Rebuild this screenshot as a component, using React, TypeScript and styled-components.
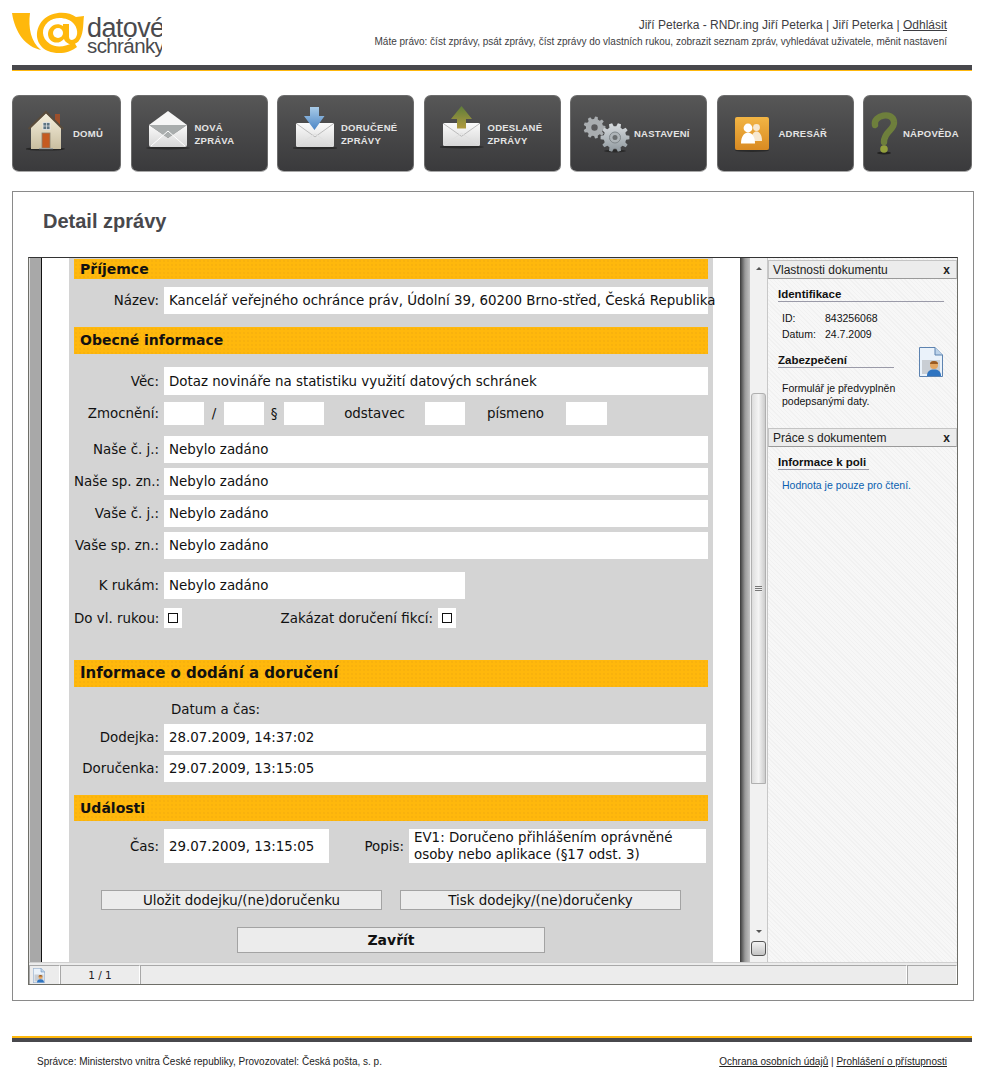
import React from "react";
import styled, { createGlobalStyle } from "styled-components";

const Global = createGlobalStyle`
  html, body { margin: 0; padding: 0; background: #fff; }
  body { font-family: "Liberation Sans", Arial, sans-serif; color: #222; }
`;

const Page = styled.div`
  width: 983px;
  height: 1075px;
  box-sizing: border-box;
  padding: 0 11px 0 12px;
  display: flex;
  flex-direction: column;
  overflow: hidden;
`;

const Header = styled.header`
  height: 65px;
  display: flex;
  justify-content: space-between;
`;
const LogoSvg = styled.svg`
  display: block;
  margin-top: 11px;
`;
const LogoWord = styled.text<{ $size: number }>`
  font-family: "Liberation Sans", Arial, sans-serif;
  font-size: ${(p) => p.$size}px;
  fill: #4a4a4e;
  letter-spacing: -0.6px;
`;
const UserBox = styled.div`
  padding: 17px 25px 0 0;
  text-align: right;
`;
const UserLine = styled.div`
  font-size: 12px;
  line-height: 16px;
  color: #3d3d42;
`;
const Rights = styled.div`
  font-size: 10px;
  line-height: 17px;
  color: #3d3d42;
`;
const DarkLink = styled.a`
  color: inherit;
  text-decoration: underline;
`;
const Rule = styled.div<{ $flip?: boolean }>`
  height: 6px;
  flex: none;
  background: ${(p) =>
    p.$flip
      ? "linear-gradient(#ffb80c 0 2px, #48484c 2px)"
      : "linear-gradient(#48484c 0 4.5px, #ffb80c 4.5px)"};
`;

const Nav = styled.nav`
  margin-top: 24px;
  display: flex;
  justify-content: space-between;
  width: 960px;
`;
const NavButton = styled.a<{ $w: number; $pad: number }>`
  width: ${(p) => p.$w}px;
  height: 77px;
  box-sizing: border-box;
  border-radius: 7px;
  border: 1px solid #6c6c6c;
  border-bottom-color: #a8a8a8;
  background: linear-gradient(#575757, #49494a 45%, #3a3a3c);
  padding-left: ${(p) => p.$pad}px;
  display: flex;
  align-items: center;
  overflow: hidden;
`;
const NavLabel = styled.span<{ $gap: number }>`
  margin-left: ${(p) => p.$gap}px;
  font-size: 9.5px;
  line-height: 13px;
  font-weight: bold;
  letter-spacing: 0.25px;
  color: #e4e4e4;
  white-space: pre-line;
`;
const IconSvg = styled.svg`
  display: block;
  flex: none;
`;

const Main = styled.main`
  margin-top: 19px;
  width: 962px;
  height: 810px;
  box-sizing: border-box;
  border: 1px solid #8a8a8a;
  padding: 0 15px;
  display: flex;
  flex-direction: column;
`;
const Title = styled.h1`
  margin: 0;
  height: 65px;
  padding: 17px 0 0 15px;
  box-sizing: border-box;
  font-size: 20px;
  line-height: 24px;
  font-weight: bold;
  color: #48484c;
`;

const Viewer = styled.section`
  width: 930px;
  height: 728px;
  box-sizing: border-box;
  border: 1px solid #6e6e68;
  border-top: 1px solid #333;
  display: flex;
  flex-direction: column;
  font-family: "DejaVu Sans", Verdana, sans-serif;
`;
const ViewerBody = styled.div`
  height: 704px;
  display: flex;
  overflow: hidden;
`;
const PageGutter = styled.div`
  width: 11px;
  flex: none;
  background: #a8a8a8;
  border-left: 1px solid #e0e0e0;
  border-right: 1px solid #111;
`;
const Paper = styled.div`
  width: 698px;
  flex: none;
  background: #fff;
  padding: 0 28px 0 27px;
  box-sizing: border-box;
`;
const Form = styled.div`
  width: 644px;
  height: 704px;
  background: #d4d4d4;
  padding: 1px 0 0 5px;
  box-sizing: border-box;
  font-size: 13.4px;
  color: #111;
`;
const SectionHead = styled.div<{ $h: number; $mt: number; $size?: number }>`
  width: 634px;
  height: ${(p) => p.$h}px;
  margin-top: ${(p) => p.$mt}px;
  background-color: #ffb80c;
  background-image: radial-gradient(#f0aa10 0.6px, transparent 0.8px);
  background-size: 4px 4px;
  padding-left: 6px;
  box-sizing: border-box;
  font-weight: bold;
  font-size: ${(p) => p.$size ?? 14}px;
  line-height: ${(p) => p.$h}px;
  color: #111;
`;
const Row = styled.div<{ $mt: number }>`
  margin-top: ${(p) => p.$mt}px;
  display: flex;
  align-items: center;
`;
const Label = styled.span<{ $w?: number }>`
  width: ${(p) => p.$w ?? 85}px;
  margin-right: 5px;
  flex: none;
  text-align: right;
  white-space: nowrap;
`;
const Field = styled.div<{ $w: number; $h?: number }>`
  width: ${(p) => p.$w}px;
  height: ${(p) => p.$h ?? 27}px;
  flex: none;
  box-sizing: border-box;
  background: #fff;
  padding: 0 5px;
  display: flex;
  align-items: center;
  white-space: nowrap;
  line-height: 17px;
`;
const WrapField = styled(Field)`
  white-space: normal;
`;
const Between = styled.span<{ $w: number }>`
  width: ${(p) => p.$w}px;
  flex: none;
  text-align: center;
`;
const CheckCell = styled.span<{ $mr?: number }>`
  width: 18px;
  height: 20px;
  background: #fff;
  flex: none;
  display: flex;
  align-items: center;
  justify-content: center;
  margin-right: ${(p) => p.$mr ?? 0}px;
`;
const CheckBox = styled.span`
  width: 8px;
  height: 8px;
  border: 1px solid #111;
  background: #fff;
`;
const PlainNote = styled.div<{ $mt: number }>`
  margin: ${(p) => p.$mt}px 0 0 97px;
  line-height: 17px;
`;
const FormButton = styled.div<{ $w: number; $h: number; $bold?: boolean; $ml: number; $mt?: number; $size?: number }>`
  width: ${(p) => p.$w}px;
  height: ${(p) => p.$h}px;
  margin-left: ${(p) => p.$ml}px;
  margin-top: ${(p) => p.$mt ?? 0}px;
  box-sizing: border-box;
  background: #ececec;
  border: 1px solid #a3a3a3;
  display: flex;
  align-items: center;
  justify-content: center;
  font-weight: ${(p) => (p.$bold ? "bold" : "normal")};
  font-size: ${(p) => p.$size ?? 13.4}px;
`;
const ButtonRow = styled.div`
  display: flex;
  margin-top: 27px;
`;

const Shade = styled.div`
  width: 10px;
  flex: none;
  background: linear-gradient(90deg, #3a3a3a, #9a9a9a 50%, #c4c4c4);
`;
const ScrollBar = styled.div`
  width: 18px;
  flex: none;
  background: #f1f1f1;
  border-right: 1px solid #c8c8c8;
  box-sizing: border-box;
  display: flex;
  flex-direction: column;
  align-items: center;
`;
const ArrowUp = styled.div`
  margin-top: 9px;
  width: 0;
  height: 0;
  border: 3.5px solid transparent;
  border-top: 0;
  border-bottom: 3.5px solid #555;
`;
const Thumb = styled.div`
  margin-top: 123px;
  width: 15px;
  height: 391px;
  box-sizing: border-box;
  border: 1px solid #b0b0b0;
  border-radius: 3px 3px 0 0;
  background: linear-gradient(90deg, #ddd, #f4f4f4 50%, #ccc);
  display: flex;
  align-items: center;
  justify-content: center;
`;
const Grip = styled.div`
  width: 7px;
  height: 6px;
  background: repeating-linear-gradient(#777 0 1px, #eee 1px 2px);
`;
const ArrowDown = styled.div`
  margin-top: 146px;
  width: 0;
  height: 0;
  border: 3.5px solid transparent;
  border-bottom: 0;
  border-top: 3.5px solid #555;
`;
const CornerBtn = styled.div`
  margin-top: 8px;
  width: 15px;
  height: 15px;
  box-sizing: border-box;
  border: 1px solid #555;
  border-radius: 3px;
  background: linear-gradient(#f2f2f2, #c4c4c4);
`;

const Side = styled.aside`
  width: 189px;
  flex: none;
  background-color: #f5f5f5;
  background-image: repeating-linear-gradient(45deg, #f1f1f1 0 1px, #f7f7f7 1px 3px);
  font-family: "Liberation Sans", Tahoma, sans-serif;
  color: #111;
`;
const PaneHead = styled.div<{ $mt: number }>`
  margin-top: ${(p) => p.$mt}px;
  height: 19px;
  box-sizing: border-box;
  background: #ececec;
  border: 1px solid #c4c4c4;
  border-bottom-color: #9a9a9a;
  padding: 0 4px;
  display: flex;
  align-items: center;
  justify-content: space-between;
  font-size: 12px;
  color: #222;
`;
const CloseMark = styled.span`
  font-weight: bold;
  font-size: 12px;
  margin-right: 2px;
`;
const PaneTitle = styled.div<{ $w: number; $mt: number }>`
  width: ${(p) => p.$w}px;
  margin: ${(p) => p.$mt}px 0 0 10px;
  border-bottom: 1px solid #9a9aa8;
  font-size: 11.5px;
  line-height: 14px;
  font-weight: bold;
  color: #111;
`;
const InfoGrid = styled.div`
  margin: 10px 0 0 14px;
  display: grid;
  grid-template-columns: 43px auto;
  row-gap: 3px;
  font-size: 10.5px;
  line-height: 13px;
`;
const SecurityRow = styled.div`
  display: flex;
  align-items: flex-start;
  justify-content: space-between;
  padding-right: 14px;
  margin-top: 6px;
`;
const DocWrap = styled.div`
  margin-top: 0;
`;
const PaneText = styled.p<{ $blue?: boolean; $mt: number }>`
  margin: ${(p) => p.$mt}px 0 0 14px;
  font-size: 10.5px;
  line-height: 13px;
  color: ${(p) => (p.$blue ? "#0a5fb0" : "#111")};
`;

const Status = styled.div`
  height: 22px;
  background: #ececec;
  border-top: 1px solid #d0d0d0;
  box-sizing: border-box;
  display: flex;
  align-items: stretch;
  padding-top: 2px;
  font-family: "DejaVu Sans", Verdana, sans-serif;
  font-size: 10.5px;
`;
const StatusCell = styled.div<{ $w?: number; $center?: boolean }>`
  ${(p) => (p.$w ? `width: ${p.$w}px; flex: none;` : "flex: 1;")}
  box-sizing: border-box;
  border-left: 1px solid #a8a8a8;
  border-top: 1px solid #a8a8a8;
  border-right: 1px solid #fff;
  display: flex;
  align-items: center;
  justify-content: ${(p) => (p.$center ? "center" : "flex-start")};
  padding-left: ${(p) => (p.$center ? 0 : 3)}px;
`;

const Footer = styled.footer`
  margin-top: 35px;
  width: 960px;
`;
const FooterText = styled.div`
  margin-top: 13px;
  padding: 0 25px;
  display: flex;
  justify-content: space-between;
  font-size: 10px;
  line-height: 13px;
  color: #222;
`;

const gearPath = (cx: number, cy: number, r: number, teeth: number) => {
  const pts: string[] = [];
  const step = (Math.PI * 2) / teeth;
  for (let i = 0; i < teeth; i++) {
    const a = i * step;
    const at = (rad: number, ang: number) =>
      `${(cx + rad * Math.cos(ang)).toFixed(2)} ${(cy + rad * Math.sin(ang)).toFixed(2)}`;
    pts.push(at(r * 0.78, a - step * 0.32), at(r, a - step * 0.18), at(r, a + step * 0.18), at(r * 0.78, a + step * 0.32));
  }
  return "M" + pts.join("L") + "Z";
};

const Logo = () => (
  <LogoSvg width="150" height="46" viewBox="12 11 150 46">
    <path d="M12 13 L30 13 C28 28 31 42 41 50 C26 47 15 33 12 13Z" fill="#ffb80c" />
    <path d="M76 17 C68 11 52 11 43 20 C33 31 36 46 48 51 C58 55 70 53 77 47 L74 42 C66 47 56 48 50 44 C41 38 41 28 48 22 C55 16 68 17 74 24 C79 30 78 39 72 40 C69 40 69 37 69 35 L69 24 L63 24 L63 26 C56 21 48 27 48 34 C48 42 58 46 64 39 C66 45 76 47 80 39 C84 32 83 22 84 16 Z" fill="#ffb80c" />
    <circle cx="58" cy="33" r="5" fill="#fff" />
    <LogoWord $size={27} x="87" y="37">datové</LogoWord>
    <LogoWord $size={20.5} x="87" y="53">schránky</LogoWord>
  </LogoSvg>
);

const Defs = () => (
  <defs>
    <linearGradient id="env" x1="0" y1="0" x2="0" y2="1">
      <stop offset="0" stopColor="#fbfbfb" />
      <stop offset="1" stopColor="#d6d6d6" />
    </linearGradient>
    <linearGradient id="wall" x1="0" y1="0" x2="0" y2="1">
      <stop offset="0" stopColor="#f6f0de" />
      <stop offset="1" stopColor="#c9bea0" />
    </linearGradient>
    <linearGradient id="blue" x1="0" y1="0" x2="0" y2="1">
      <stop offset="0" stopColor="#a8cbe8" />
      <stop offset="1" stopColor="#4c86c6" />
    </linearGradient>
    <linearGradient id="green" x1="0" y1="0" x2="0" y2="1">
      <stop offset="0" stopColor="#5f7d3a" />
      <stop offset="1" stopColor="#b09a3e" />
    </linearGradient>
    <linearGradient id="gear" x1="0" y1="0" x2="0" y2="1">
      <stop offset="0" stopColor="#d9dde0" />
      <stop offset="1" stopColor="#8f989e" />
    </linearGradient>
    <linearGradient id="orange" x1="0" y1="0" x2="0" y2="1">
      <stop offset="0" stopColor="#f2b544" />
      <stop offset="1" stopColor="#d98a22" />
    </linearGradient>
  </defs>
);

const Envelope = ({ x, w, y, h }: { x: number; w: number; y: number; h: number }) => (
  <g>
    <ellipse cx={x + w / 2} cy={y + h + 1} rx={w / 2 + 4} ry="1.5" fill="#2a2a2a" />
    <rect x={x} y={y} width={w} height={h} rx="1.5" fill="url(#env)" />
    <path d={`M${x + 1} ${y + 1} L${x + w / 2} ${y + h * 0.58} L${x + w - 1} ${y + 1}`} fill="none" stroke="#bcbcbc" strokeWidth="1" />
    <path d={`M${x + 1} ${y + h - 1} L${x + w / 2} ${y + h * 0.45} L${x + w - 1} ${y + h - 1}`} fill="none" stroke="#e0e0e0" strokeWidth="1" />
  </g>
);

const HouseIcon = () => (
  <IconSvg width="40" height="60" viewBox="26 104 40 60">
    <Defs />
    <ellipse cx="45" cy="149" rx="20" ry="1.6" fill="#262626" />
    <rect x="55" y="114" width="5" height="11" fill="#9c4f2c" />
    <path d="M31 127 L46 113 L61 127 L61 149 L31 149Z" fill="url(#wall)" />
    <path d="M28.5 129 L46 112 L63 129" fill="none" stroke="#5a4c3c" strokeWidth="2" />
    <rect x="43" y="122.5" width="7" height="7" fill="#5c7482" stroke="#e8e8e8" strokeWidth="0.8" />
    <path d="M46.5 122.5 V129.5 M43 126 H50" stroke="#e8e8e8" strokeWidth="0.7" />
    <rect x="42" y="133" width="8" height="15" fill="#c55a20" stroke="#8a8270" strokeWidth="0.8" />
    <rect x="39" y="148" width="14" height="1.2" fill="#9aa0a0" />
  </IconSvg>
);
const NewMailIcon = () => (
  <IconSvg width="44" height="60" viewBox="146 104 44 60">
    <Defs />
    <ellipse cx="168" cy="148" rx="22" ry="1.5" fill="#2a2a2a" />
    <path d="M149 125 L168 111 L187 125Z" fill="#f6f6f6" />
    <path d="M149 125 L187 125 L168 138Z" fill="#a9adad" />
    <path d="M149 125 L168 138 L187 125 L187 145 Q187 147 185 147 L151 147 Q149 147 149 145Z" fill="url(#env)" />
    <path d="M151 146 L168 131 L185 146" fill="none" stroke="#fff" strokeWidth="1" />
  </IconSvg>
);
const InboxIcon = () => (
  <IconSvg width="44" height="60" viewBox="293 104 44 60">
    <Defs />
    <Envelope x={296} w={38} y={123} h={24} />
    <path d="M310 107 H319 V116 H324.5 L314.5 130 L304 116 H310Z" fill="url(#blue)" />
  </IconSvg>
);
const OutboxIcon = () => (
  <IconSvg width="44" height="60" viewBox="440 104 44 60">
    <Defs />
    <Envelope x={443} w={37} y={123} h={23} />
    <path d="M461.5 106 L472 119 H466 V128.5 H457 V119 H451Z" fill="url(#green)" />
  </IconSvg>
);
const GearsIcon = () => (
  <IconSvg width="50" height="60" viewBox="582 104 50 60">
    <Defs />
    <ellipse cx="615" cy="151" rx="11" ry="1.5" fill="#2a2a2a" />
    <path d={gearPath(594.5, 127.5, 11, 9)} fill="#a9adb0" />
    <circle cx="594.5" cy="127.5" r="3.2" fill="#5a5a5c" />
    <path d={gearPath(615, 137.5, 14.5, 10)} fill="url(#gear)" />
    <circle cx="615" cy="137.5" r="5.5" fill="#aeb4b8" stroke="#7f868a" strokeWidth="1" />
    <circle cx="615" cy="137.5" r="2.5" fill="#6a6e70" />
  </IconSvg>
);
const BookIcon = () => (
  <IconSvg width="36" height="60" viewBox="735 104 36 60">
    <Defs />
    <ellipse cx="752" cy="150.5" rx="17" ry="1.4" fill="#2a2a2a" />
    <rect x="735" y="117" width="34" height="33" rx="2" fill="url(#orange)" />
    <circle cx="756.5" cy="127.5" r="3.4" fill="#f7e8cf" />
    <path d="M751 141 C751 134 754 131.5 756.5 131.5 C759 131.5 762 134 762 141Z" fill="#f7e8cf" />
    <circle cx="748" cy="128" r="4.4" fill="#fff" />
    <path d="M741 143.5 C741 136 744.5 132.5 748 132.5 C751.5 132.5 755 136 755 143.5Z" fill="#fff" />
  </IconSvg>
);
const HelpIcon = () => (
  <IconSvg width="30" height="60" viewBox="869 104 30 60">
    <Defs />
    <ellipse cx="884" cy="153" rx="7" ry="1.4" fill="#222" />
    <path d="M875 125 C873 115 893 111 894 122 C895 130 884 131 884 142" fill="none" stroke="#6e7f3c" strokeWidth="6.4" strokeLinecap="round" />
    <circle cx="884" cy="149" r="3.8" fill="#93a03c" />
  </IconSvg>
);
const DocIcon = ({ w, h }: { w: number; h: number }) => (
  <IconSvg width={w} height={h} viewBox="0 0 24 30">
    <path d="M0.5 0.5 H16 L23.5 8 V29.5 H0.5Z" fill="#eaf2fa" stroke="#5d83b0" />
    <path d="M16 0.5 V8 H23.5" fill="#bcd3ea" stroke="#5d83b0" />
    <rect x="3" y="13" width="18" height="14" fill="#c9ced4" />
    <circle cx="15" cy="18" r="4" fill="#e3a560" />
    <path d="M15 14 a4 3 0 0 1 4 3 H11 a4 3 0 0 1 4 -3Z" fill="#9a5a22" />
    <path d="M8 29 C8 24 11 22.5 15 22.5 C19 22.5 22 24 22 29Z" fill="#2f74c0" />
  </IconSvg>
);

const navItems = [
  { w: 109, pad: 13, gap: 7, label: "DOMŮ", icon: <HouseIcon /> },
  { w: 137, pad: 14, gap: 5, label: "NOVÁ\nZPRÁVA", icon: <NewMailIcon /> },
  { w: 137, pad: 15, gap: 4, label: "DORUČENÉ\nZPRÁVY", icon: <InboxIcon /> },
  { w: 137, pad: 15, gap: 4, label: "ODESLANÉ\nZPRÁVY", icon: <OutboxIcon /> },
  { w: 137, pad: 11, gap: 2, label: "NASTAVENÍ", icon: <GearsIcon /> },
  { w: 137, pad: 17, gap: 8, label: "ADRESÁŘ", icon: <BookIcon /> },
  { w: 109, pad: 5, gap: 4, label: "NÁPOVĚDA", icon: <HelpIcon /> },
];

const blankRefs = ["Naše č. j.:", "Naše sp. zn.:", "Vaše č. j.:", "Vaše sp. zn.:"];

export default function App() {
  return (
    <Page>
      <Global />
      <Header>
        <Logo />
        <UserBox>
          <UserLine>
            Jiří Peterka - RNDr.ing Jiří Peterka | Jiří Peterka | <DarkLink>Odhlásit</DarkLink>
          </UserLine>
          <Rights>
            Máte právo: číst zprávy, psát zprávy, číst zprávy do vlastních rukou, zobrazit seznam zpráv, vyhledávat uživatele, měnit nastavení
          </Rights>
        </UserBox>
      </Header>
      <Rule />
      <Nav>
        {navItems.map((n) => (
          <NavButton key={n.label} $w={n.w} $pad={n.pad}>
            {n.icon}
            <NavLabel $gap={n.gap}>{n.label}</NavLabel>
          </NavButton>
        ))}
      </Nav>
      <Main>
        <Title>Detail zprávy</Title>
        <Viewer>
          <ViewerBody>
            <PageGutter />
            <Paper>
              <Form>
                <SectionHead $h={20} $mt={0}>Příjemce</SectionHead>
                <Row $mt={8}>
                  <Label>Název:</Label>
                  <Field $w={544}>Kancelář veřejného ochránce práv, Údolní 39, 60200 Brno-střed, Česká Republika</Field>
                </Row>
                <SectionHead $h={27} $mt={13}>Obecné informace</SectionHead>
                <Row $mt={13}>
                  <Label>Věc:</Label>
                  <Field $w={544} $h={28}>Dotaz novináře na statistiku využití datových schránek</Field>
                </Row>
                <Row $mt={7}>
                  <Label>Zmocnění:</Label>
                  <Field $w={40} $h={23} />
                  <Between $w={20}>/</Between>
                  <Field $w={40} $h={23} />
                  <Between $w={20}>§</Between>
                  <Field $w={40} $h={23} />
                  <Between $w={101}>odstavec</Between>
                  <Field $w={40} $h={23} />
                  <Between $w={101}>písmeno</Between>
                  <Field $w={41} $h={23} />
                </Row>
                {blankRefs.map((l, i) => (
                  <Row key={l} $mt={i === 0 ? 11 : 5}>
                    <Label>{l}</Label>
                    <Field $w={544}>Nebylo zadáno</Field>
                  </Row>
                ))}
                <Row $mt={13}>
                  <Label>K rukám:</Label>
                  <Field $w={301}>Nebylo zadáno</Field>
                </Row>
                <Row $mt={9}>
                  <Label>Do vl. rukou:</Label>
                  <CheckCell $mr={98}><CheckBox /></CheckCell>
                  <Label $w={153}>Zakázat doručení fikcí:</Label>
                  <CheckCell><CheckBox /></CheckCell>
                </Row>
                <SectionHead $h={27} $mt={32} $size={15}>Informace o dodání a doručení</SectionHead>
                <PlainNote $mt={14}>Datum a čas:</PlainNote>
                <Row $mt={6}>
                  <Label>Dodejka:</Label>
                  <Field $w={542}>28.07.2009, 14:37:02</Field>
                </Row>
                <Row $mt={4}>
                  <Label>Doručenka:</Label>
                  <Field $w={542}>29.07.2009, 13:15:05</Field>
                </Row>
                <SectionHead $h={26} $mt={13}>Události</SectionHead>
                <Row $mt={8}>
                  <Label>Čas:</Label>
                  <Field $w={165} $h={34}>29.07.2009, 13:15:05</Field>
                  <Label $w={75}>Popis:</Label>
                  <WrapField $w={297} $h={34}>EV1: Doručeno přihlášením oprávněné osoby nebo aplikace (§17 odst. 3)</WrapField>
                </Row>
                <ButtonRow>
                  <FormButton $w={281} $h={20} $ml={27}>Uložit dodejku/(ne)doručenku</FormButton>
                  <FormButton $w={281} $h={20} $ml={18}>Tisk dodejky/(ne)doručenky</FormButton>
                </ButtonRow>
                <FormButton $w={308} $h={26} $ml={163} $mt={17} $bold $size={14}>Zavřít</FormButton>
              </Form>
            </Paper>
            <Shade />
            <ScrollBar>
              <ArrowUp />
              <Thumb><Grip /></Thumb>
              <ArrowDown />
              <CornerBtn />
            </ScrollBar>
            <Side>
              <PaneHead $mt={2}>Vlastnosti dokumentu<CloseMark>x</CloseMark></PaneHead>
              <PaneTitle $w={166} $mt={8}>Identifikace</PaneTitle>
              <InfoGrid>
                <span>ID:</span><span>843256068</span>
                <span>Datum:</span><span>24.7.2009</span>
              </InfoGrid>
              <SecurityRow>
                <PaneTitle $w={116} $mt={6}>Zabezpečení</PaneTitle>
                <DocWrap><DocIcon w={24} h={30} /></DocWrap>
              </SecurityRow>
              <PaneText $mt={5}>Formulář je předvyplněn<br />podepsanými daty.</PaneText>
              <PaneHead $mt={20}>Práce s dokumentem<CloseMark>x</CloseMark></PaneHead>
              <PaneTitle $w={91} $mt={8}>Informace k poli</PaneTitle>
              <PaneText $blue $mt={9}>Hodnota je pouze pro čtení.</PaneText>
            </Side>
          </ViewerBody>
          <Status>
            <StatusCell $w={31}><DocIcon w={12} h={15} /></StatusCell>
            <StatusCell $w={80} $center>1 / 1</StatusCell>
            <StatusCell />
            <StatusCell $w={50} />
          </Status>
        </Viewer>
      </Main>
      <Footer>
        <Rule $flip />
        <FooterText>
          <span>Správce: Ministerstvo vnitra České republiky, Provozovatel: Česká pošta, s. p.</span>
          <span><DarkLink>Ochrana osobních údajů</DarkLink> | <DarkLink>Prohlášení o přístupnosti</DarkLink></span>
        </FooterText>
      </Footer>
    </Page>
  );
}
